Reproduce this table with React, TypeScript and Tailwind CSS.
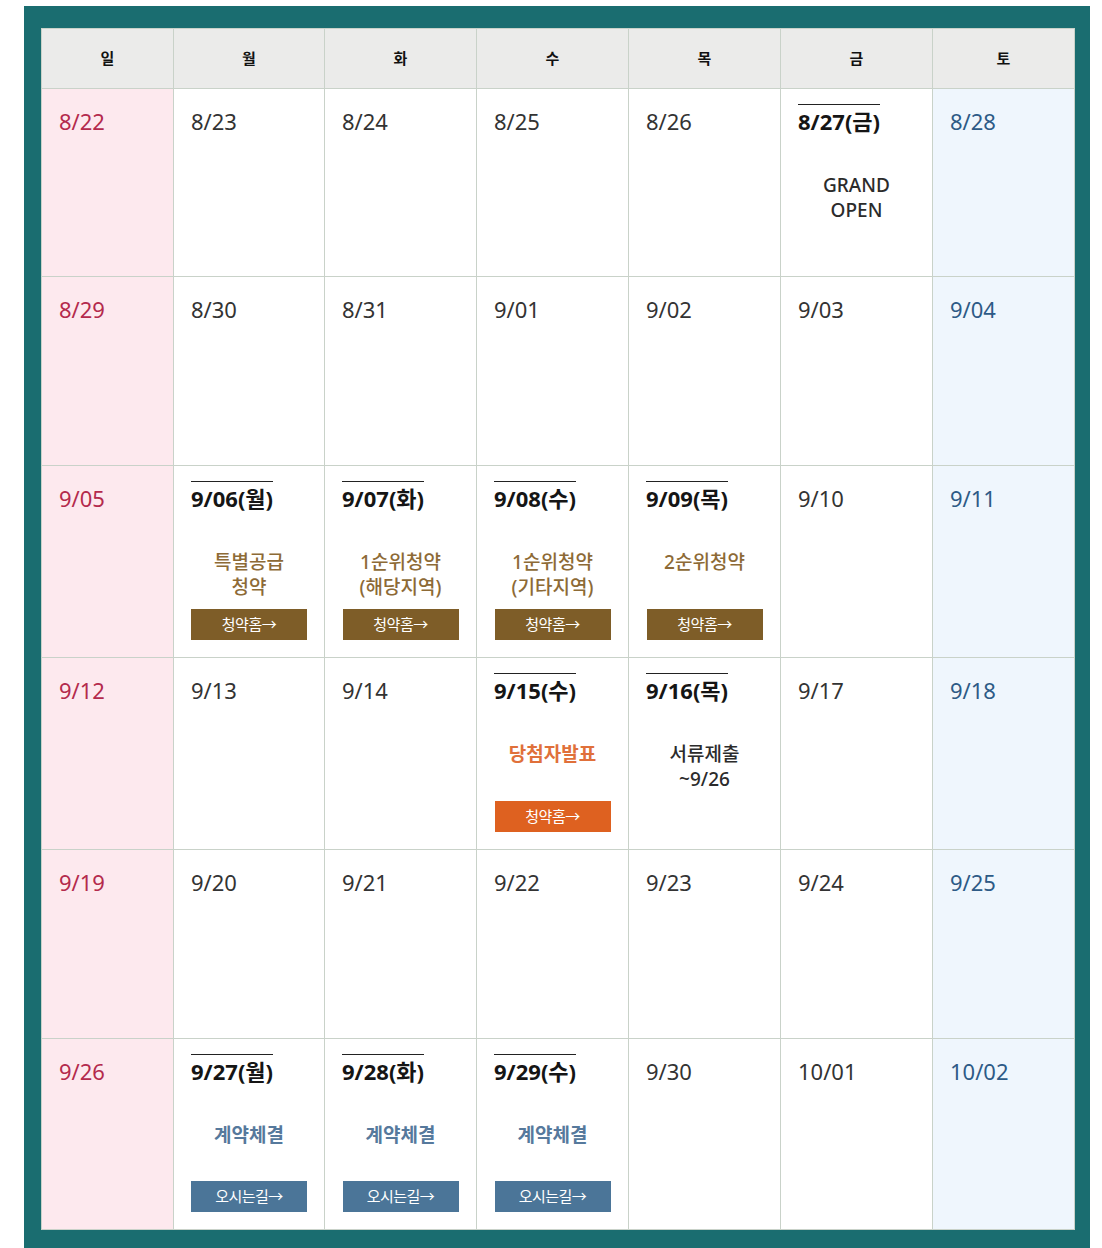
import React from "react";

type Ev = {
  text?: string[];
  tone?: "brown" | "orange" | "blue" | "dark";
  btn?: string;
};
type Cell = { d: string; bold?: boolean; ev?: Ev };

const rows: { h: string; cells: Cell[] }[] = [
  {
    h: "h-[188px]",
    cells: [
      { d: "8/22" },
      { d: "8/23" },
      { d: "8/24" },
      { d: "8/25" },
      { d: "8/26" },
      { d: "8/27(금)", bold: true, ev: { text: ["GRAND", "OPEN"], tone: "dark" } },
      { d: "8/28" },
    ],
  },
  {
    h: "h-[189px]",
    cells: [
      { d: "8/29" },
      { d: "8/30" },
      { d: "8/31" },
      { d: "9/01" },
      { d: "9/02" },
      { d: "9/03" },
      { d: "9/04" },
    ],
  },
  {
    h: "h-[192px]",
    cells: [
      { d: "9/05" },
      { d: "9/06(월)", bold: true, ev: { text: ["특별공급", "청약"], tone: "brown", btn: "청약홈→" } },
      { d: "9/07(화)", bold: true, ev: { text: ["1순위청약", "(해당지역)"], tone: "brown", btn: "청약홈→" } },
      { d: "9/08(수)", bold: true, ev: { text: ["1순위청약", "(기타지역)"], tone: "brown", btn: "청약홈→" } },
      { d: "9/09(목)", bold: true, ev: { text: ["2순위청약"], tone: "brown", btn: "청약홈→" } },
      { d: "9/10" },
      { d: "9/11" },
    ],
  },
  {
    h: "h-[192px]",
    cells: [
      { d: "9/12" },
      { d: "9/13" },
      { d: "9/14" },
      { d: "9/15(수)", bold: true, ev: { text: ["당첨자발표"], tone: "orange", btn: "청약홈→" } },
      { d: "9/16(목)", bold: true, ev: { text: ["서류제출", "~9/26"], tone: "dark" } },
      { d: "9/17" },
      { d: "9/18" },
    ],
  },
  {
    h: "h-[189px]",
    cells: [
      { d: "9/19" },
      { d: "9/20" },
      { d: "9/21" },
      { d: "9/22" },
      { d: "9/23" },
      { d: "9/24" },
      { d: "9/25" },
    ],
  },
  {
    h: "h-[191px]",
    cells: [
      { d: "9/26" },
      { d: "9/27(월)", bold: true, ev: { text: ["계약체결"], tone: "blue", btn: "오시는길→" } },
      { d: "9/28(화)", bold: true, ev: { text: ["계약체결"], tone: "blue", btn: "오시는길→" } },
      { d: "9/29(수)", bold: true, ev: { text: ["계약체결"], tone: "blue", btn: "오시는길→" } },
      { d: "9/30" },
      { d: "10/01" },
      { d: "10/02" },
    ],
  },
];

const days = ["일", "월", "화", "수", "목", "금", "토"];

function EvText({ ev }: { ev: Ev }) {
  const color =
    ev.tone === "brown"
      ? "text-[#8d6a36] font-medium"
      : ev.tone === "orange"
      ? "text-[#e0703a] font-bold"
      : ev.tone === "blue"
      ? "text-[#56799c] font-bold"
      : "text-[#2b2b2b] font-medium";
  const btnBg =
    ev.tone === "brown"
      ? "bg-[#7e5d28]"
      : ev.tone === "orange"
      ? "bg-[#de6120]"
      : "bg-[#4b7598]";
  return (
    <>
      <div className={`mt-[36px] text-center text-[19px] leading-[25px] ${color}`}>
        {ev.text?.map((t, i) => (
          <div key={i}>{t}</div>
        ))}
      </div>
      {ev.btn && (
        <div className="mt-auto flex justify-center">
          <div
            className={`flex h-[31px] w-[116px] items-center justify-center text-[15px] tracking-[-0.5px] text-white ${btnBg}`}
          >
            {ev.btn}
          </div>
        </div>
      )}
    </>
  );
}

export default function App() {
  return (
    <div
      className="min-h-[1248px] bg-white pl-[24px] pt-[6px]"
      style={{ fontFamily: '"Noto Sans", "Noto Sans CJK KR", sans-serif' }}
    >
      <div className="w-[1066px] bg-[#1a6d70] pb-[18px] pl-[17px] pr-[15px] pt-[22px]">
        <div className="grid grid-cols-[132px_151px_152px_152px_152px_152px_142px] border-l border-t border-[#c9d2c9]">
          {days.map((d) => (
            <div
              key={d}
              className="flex h-[60px] items-center justify-center border-b border-r border-[#c9d2c9] bg-[#ebebea] text-[15px] font-bold text-[#111]"
            >
              {d}
            </div>
          ))}
          {rows.map((r, ri) =>
            r.cells.map((c, ci) => {
              const bg =
                ci === 0 ? "bg-[#fde9ee]" : ci === 6 ? "bg-[#eff6fd]" : "bg-white";
              const dateColor = c.bold
                ? "text-[#151515] font-bold"
                : ci === 0
                ? "text-[#b42a4c]"
                : ci === 6
                ? "text-[#2d5a86]"
                : "text-[#333333]";
              return (
                <div
                  key={`${ri}-${ci}`}
                  className={`flex flex-col border-b border-r border-[#c9d2c9] pb-[17px] pl-[17px] pr-[17px] pt-[15px] ${r.h} ${bg}`}
                >
                  <div>
                    <span
                      className={`inline-block border-t text-[22px] leading-[32px] ${
                        c.bold ? "border-[#222]" : "border-transparent"
                      } ${dateColor}`}
                    >
                      {c.d}
                    </span>
                  </div>
                  {c.ev && <EvText ev={c.ev} />}
                </div>
              );
            })
          )}
        </div>
      </div>
    </div>
  );
}
